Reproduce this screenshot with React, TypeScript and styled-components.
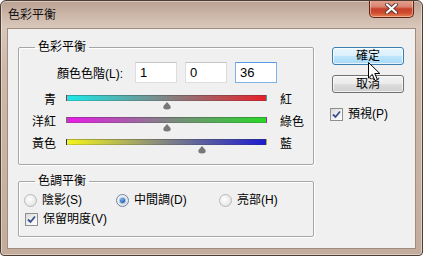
import React from 'react'
import styled, { createGlobalStyle } from 'styled-components'

const GlobalStyle = createGlobalStyle`
  html, body {
    margin: 0;
    padding: 0;
    background: #fff;
  }
  body {
    font-family: "Liberation Sans", "Noto Sans CJK TC", sans-serif;
    font-size: 12px;
    color: #000;
  }
`

const Window = styled.div`
  position: relative;
  width: 423px;
  height: 256px;
  box-sizing: border-box;
  border: 1px solid #4d3d33;
  border-radius: 6px 6px 4px 4px;
  background: linear-gradient(180deg, #b9a191 0px, #cab4a5 12px, #d8c7ba 26px, #cdb8a9 70px, #c3ac9b 100%);
  box-shadow: inset 0 0 0 1px rgba(255, 255, 255, 0.4);
  display: flex;
  flex-direction: column;
  overflow: hidden;
`

const TitleBar = styled.div`
  height: 27px;
  flex: none;
  display: flex;
  align-items: flex-start;
  padding-left: 7px;
`

const Title = styled.div`
  margin-top: 7px;
  line-height: 14px;
  color: #111;
`

const CloseButton = styled.div`
  margin-left: auto;
  margin-right: 8px;
  margin-top: -1px;
  width: 45px;
  height: 18px;
  box-sizing: border-box;
  border: 1px solid #5e2418;
  border-top: none;
  border-radius: 0 0 5px 5px;
  background: linear-gradient(180deg, #e6a593 0%, #d98370 40%, #c5412b 52%, #cf4a31 75%, #e6824f 100%);
  box-shadow: inset 0 0 0 1px rgba(255, 220, 200, 0.5);
  display: flex;
  align-items: center;
  justify-content: center;
`

const Client = styled.div`
  flex: 1;
  margin: 0 6px 6px 6px;
  background: #f0f0f0;
  border: 1px solid #a08c7d;
  display: flex;
  gap: 16px;
  padding: 11px 0 0 10px;
`

const LeftColumn = styled.div`
  width: 296px;
  display: flex;
  flex-direction: column;
`

const Group = styled.fieldset<{ $bottom: number; $gapTop?: number }>`
  margin: ${({ $gapTop }) => $gapTop ?? 0}px 0 0 0;
  padding: 0 0 ${({ $bottom }) => $bottom}px 0;
  border: 1px solid #a6a6a6;
  border-radius: 2px;
  box-shadow: inset 1px 1px 0 #fff, 1px 1px 0 #fff;
  min-width: 0;
`

const GroupTitle = styled.legend`
  margin-left: 16px;
  padding: 0 3px;
  line-height: 14px;
`

const LevelsRow = styled.div`
  display: flex;
  align-items: center;
  margin-top: 8px;
  height: 21px;
`

const LevelsLabel = styled.div`
  width: 104px;
  text-align: right;
  margin-right: 12px;
`

const NumberBox = styled.input<{ $active?: boolean }>`
  width: 42px;
  height: 21px;
  box-sizing: border-box;
  margin: 0 8px 0 0;
  padding: 0 0 0 4px;
  font: 13px "Liberation Sans", sans-serif;
  color: #000;
  background: #fff;
  border: 1px solid ${({ $active }) => ($active ? '#7eb4ea' : '#dcdde2')};
  border-top-color: ${({ $active }) => ($active ? '#569de5' : '#c4c6cc')};
  outline: none;
`

const Sliders = styled.div`
  margin-top: 12px;
  display: flex;
  flex-direction: column;
`

const SliderRow = styled.div`
  display: flex;
  align-items: flex-start;
  height: 22px;
`

const SideLabel = styled.div<{ $right?: boolean }>`
  width: ${({ $right }) => ($right ? 'auto' : '37px')};
  text-align: ${({ $right }) => ($right ? 'left' : 'right')};
  margin: -2px ${({ $right }) => ($right ? 0 : 10)}px 0 ${({ $right }) => ($right ? 13 : 0)}px;
  line-height: 14px;
`

const Track = styled.div<{ $from: string; $to: string }>`
  position: relative;
  width: 201px;
  height: 6px;
  box-sizing: border-box;
  border: 1px solid rgba(60, 60, 60, 0.35);
  border-bottom-color: rgba(60, 60, 60, 0.2);
  background: linear-gradient(90deg, ${({ $from }) => $from}, #808484 50%, ${({ $to }) => $to});
`

const Thumb = styled.svg`
  position: absolute;
  top: 6px;
  margin-left: -5px;
`

const ToneRow = styled.div`
  display: grid;
  grid-template-columns: 92px 103px auto;
  padding-left: 5px;
  margin-top: 6px;
  height: 13px;
`

const Option = styled.div`
  display: flex;
  align-items: center;
  gap: 5px;
  line-height: 13px;
  white-space: nowrap;
`

const Radio = styled.div<{ $checked?: boolean }>`
  width: 13px;
  height: 13px;
  box-sizing: border-box;
  border-radius: 50%;
  border: 1px solid ${({ $checked }) => ($checked ? '#6c86a8' : '#b9b9b9')};
  background: radial-gradient(circle at 40% 40%, #ffffff 0%, #e6e6e6 70%, #d2d2d2 100%);
  display: flex;
  align-items: center;
  justify-content: center;
  flex: none;
`

const RadioDot = styled.div`
  width: 5px;
  height: 5px;
  border-radius: 50%;
  background: radial-gradient(circle at 40% 35%, #7fb8f0 0%, #2a6fc4 55%, #1a4788 100%);
  box-shadow: 0 0 1px 1px rgba(40, 90, 160, 0.35);
`

const CheckRow = styled.div`
  margin-top: 6px;
  padding-left: 6px;
  height: 13px;
`

const Box = styled.div`
  width: 13px;
  height: 13px;
  box-sizing: border-box;
  border: 1px solid #8e8f8f;
  background: linear-gradient(135deg, #d8d8d8 0%, #f4f4f4 60%, #ffffff 100%);
  display: flex;
  align-items: center;
  justify-content: center;
  flex: none;
`

const SideColumn = styled.div`
  display: flex;
  flex-direction: column;
  align-items: flex-start;
  padding-top: 7px;
`

const Button = styled.div<{ $hot?: boolean }>`
  width: 72px;
  height: 18px;
  margin: 0 0 10px 2px;
  box-sizing: border-box;
  border: 1px solid ${({ $hot }) => ($hot ? '#3c7fb1' : '#707070')};
  border-radius: 3px;
  background: ${({ $hot }) =>
    $hot
      ? 'linear-gradient(180deg, #eaf6fd 0%, #d9f0fc 50%, #bee6fd 51%, #a7d9f5 100%)'
      : 'linear-gradient(180deg, #f2f2f2 0%, #ebebeb 50%, #dddddd 51%, #cfcfcf 100%)'};
  box-shadow: inset 0 0 0 1px rgba(255, 255, 255, 0.7);
  display: flex;
  align-items: center;
  justify-content: center;
  line-height: 14px;
`

const PreviewRow = styled.div`
  margin-top: 5px;
`

const Cursor = styled.svg`
  position: absolute;
  left: 367px;
  top: 61px;
`

const sliders = [
  { left: '青', right: '紅', from: '#1ce8e8', to: '#e8202a', value: 1 },
  { left: '洋紅', right: '綠色', from: '#e81ce8', to: '#28d828', value: 0 },
  { left: '黃色', right: '藍', from: '#f4f41c', to: '#1c1cd0', value: 36 },
]

function Check() {
  return (
    <Box>
      <svg width="9" height="9" viewBox="0 0 9 9">
        <path d="M1 4.5 L3.5 7 L8 1.5" fill="none" stroke="#3a4d8f" strokeWidth="1.8" />
      </svg>
    </Box>
  )
}

export default function App() {
  return (
    <>
      <GlobalStyle />
      <Window>
        <TitleBar>
          <Title>色彩平衡</Title>
          <CloseButton>
            <svg width="13" height="11" viewBox="0 0 13 11">
              <path d="M2 1.5 L11 9.5 M11 1.5 L2 9.5" stroke="#5a3a36" strokeWidth="4" strokeLinecap="round" />
              <path d="M2 1.5 L11 9.5 M11 1.5 L2 9.5" stroke="#ffffff" strokeWidth="2.2" strokeLinecap="round" />
            </svg>
          </CloseButton>
        </TitleBar>
        <Client>
          <LeftColumn>
            <Group $bottom={3}>
              <GroupTitle>色彩平衡</GroupTitle>
              <LevelsRow>
                <LevelsLabel>顏色色階(L):</LevelsLabel>
                <NumberBox readOnly value="1" />
                <NumberBox readOnly value="0" />
                <NumberBox readOnly value="36" $active />
              </LevelsRow>
              <Sliders>
                {sliders.map((s) => (
                  <SliderRow key={s.left}>
                    <SideLabel>{s.left}</SideLabel>
                    <Track $from={s.from} $to={s.to}>
                      <Thumb width="10" height="8" viewBox="0 0 10 8" style={{ left: `${50 + s.value / 2}%` }}>
                        <path d="M5 0 L8.5 4 Q9.5 7.5 5 7.5 Q0.5 7.5 1.5 4 Z" fill="#787878" />
                      </Thumb>
                    </Track>
                    <SideLabel $right>{s.right}</SideLabel>
                  </SliderRow>
                ))}
              </Sliders>
            </Group>
            <Group $bottom={10} $gapTop={9}>
              <GroupTitle>色調平衡</GroupTitle>
              <ToneRow>
                <Option>
                  <Radio />
                  陰影(S)
                </Option>
                <Option>
                  <Radio $checked>
                    <RadioDot />
                  </Radio>
                  中間調(D)
                </Option>
                <Option>
                  <Radio />
                  亮部(H)
                </Option>
              </ToneRow>
              <CheckRow>
                <Option>
                  <Check />
                  保留明度(V)
                </Option>
              </CheckRow>
            </Group>
          </LeftColumn>
          <SideColumn>
            <Button $hot>確定</Button>
            <Button>取消</Button>
            <PreviewRow>
              <Option>
                <Check />
                預視(P)
              </Option>
            </PreviewRow>
          </SideColumn>
        </Client>
        <Cursor width="13" height="20" viewBox="0 0 13 20">
          <path d="M0.5 0.5 L0.5 16 L4.3 12.4 L7 18.6 L9.4 17.6 L6.8 11.5 L11.8 11.5 Z" fill="#fff" stroke="#000" strokeWidth="1" strokeLinejoin="round" />
        </Cursor>
      </Window>
    </>
  )
}
